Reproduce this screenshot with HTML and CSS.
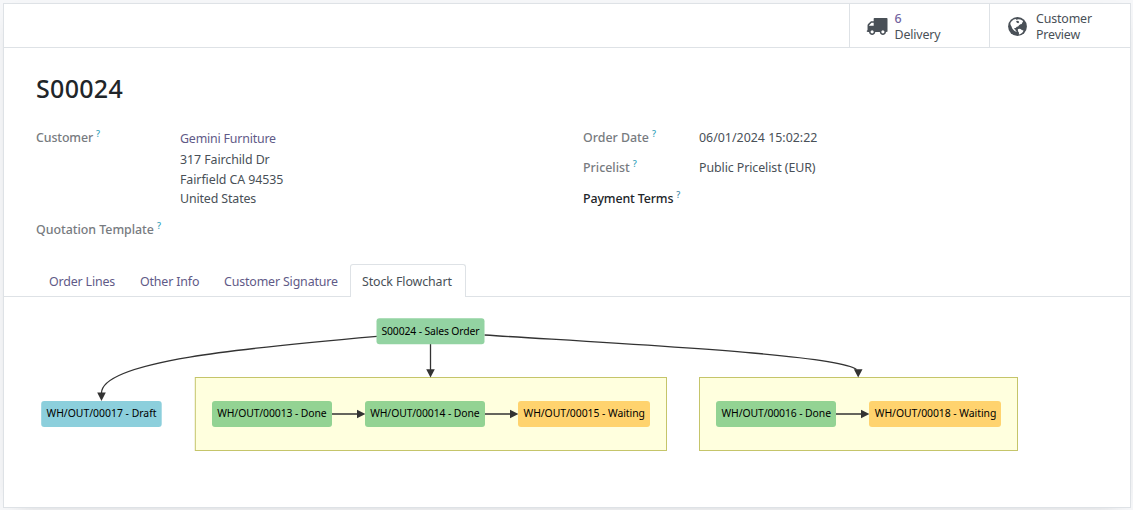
FILE: index.html
```html
<!DOCTYPE html>
<html lang="en">
<head>
<meta charset="utf-8">
<title>S00024</title>
<link rel="stylesheet" href="styles.css">
</head>
<body>
<main class="sheet">
  <header class="button-box">
    <button class="stat delivery">
      <svg class="truck" viewBox="0 0 1792 1792"><path d="M640 1408q0-52-38-90t-90-38-90 38-38 90 38 90 90 38 90-38 38-90zm-384-512h384v-256h-158q-13 0-22 9l-195 195q-9 9-9 22v30zm1280 512q0-52-38-90t-90-38-90 38-38 90 38 90 90 38 90-38 38-90zm256-1088v1024q0 15-4 26.5t-13.5 18.5-16.5 11.5-23.5 6-22.5 2-25.5 0-22.5-.5q0 106-75 181t-181 75-181-75-75-181h-384q0 106-75 181t-181 75-181-75-75-181h-64q-3 0-22.5.5t-25.5 0-22.5-2-23.5-6-16.5-11.5-13.5-18.5-4-26.5q0-26 19-45t45-19v-320q0-8-.5-35t0-38 2.5-34.5 6.5-37 14-30.5 22.5-30l198-198q19-19 50.5-32t58.5-13h160v-192q0-26 19-45t45-19h1024q26 0 45 19t19 45z"/></svg>
      <span class="stat-text"><b class="count">6</b><span class="t-delivery">Delivery</span></span>
    </button>
    <button class="stat preview">
      <svg class="globe" viewBox="0 0 19 19"><circle cx="9.5" cy="9.5" r="9.4"/><path class="land" d="M2.300 6 3.600 4.200 5.700 2.600 8 2l.5.900 1.500-.700 2.500.300 2.300 1.300.2 1.300-1.200.8.200 1.200-1.600.2-1.300 1-1 1.300-1.300.2-1.100 1.300-1.200-.100-.300 1 1.100.5.400 1.200 1 .6-.5.500-1.600-.700-1.300-1.300-1.200-1.600-.600-1.800-.900-1.500zM9.800 12.200l1.300-.5 1.500.4 1.200 1 1.700.5-.6 1.400-1.300 1.300-1.700.9-1 .3.100-1.700-1-1.500z"/><path d="M8.800 3.800l1.700.3.700 1.200-1 .9-1.300-.500-.8-1.100z"/></svg>
      <span class="stat-text"><span class="t-customer">Customer</span><span class="t-preview">Preview</span></span>
    </button>
  </header>

  <h1 class="title"><span>S00024</span></h1>

  <section class="fields">
    <div class="group">
      <div class="row customer-row">
        <label class="label"><span class="t-lcustomer">Customer</span><sup>?</sup></label>
        <div class="address">
          <a class="link t-gemini">Gemini Furniture</a>
          <span class="t-street">317 Fairchild Dr</span>
          <span class="t-city">Fairfield CA 94535</span>
          <span class="t-country">United States</span>
        </div>
      </div>
      <div class="row"><label class="label"><span class="t-quotation">Quotation Template</span><sup>?</sup></label></div>
    </div>
    <div class="group right">
      <div class="row"><label class="label"><span class="t-date">Order Date</span><sup>?</sup></label><span class="t-datevalue">06/01/2024 15:02:22</span></div>
      <div class="row"><label class="label"><span class="t-pricelist">Pricelist</span><sup>?</sup></label><span class="t-price">Public Pricelist (EUR)</span></div>
      <div class="row terms"><label class="label strong"><span class="t-payment">Payment Terms</span><sup>?</sup></label></div>
    </div>
  </section>

  <nav class="tabs">
    <a class="tab tab-lines"><span>Order Lines</span></a>
    <a class="tab tab-info"><span>Other Info</span></a>
    <a class="tab tab-signature"><span>Customer Signature</span></a>
    <a class="tab tab-flow active"><span>Stock Flowchart</span></a>
  </nav>

  <svg class="flowchart" viewBox="4 297 1126 180" width="1126" height="180">
    <rect class="cluster" x="195.300" y="377.500" width="471.200" height="73"/>
    <rect class="cluster" x="699.500" y="377.500" width="318" height="73"/>
    <g class="edges">
      <path d="M377 336.300C245 348 101.500 361 101.500 393"/>
      <path d="M430.500 344V370"/>
      <path d="M484.500 335C650 345.500 838 355 856.500 369.500"/>
      <path d="M332 414H362M485 414H515M836 414H866"/>
    </g>
    <g class="heads">
      <path d="M97.200 392.600h8.600l-4.300 8.400zM426.200 369.200h8.600l-4.300 8.400zM853.900 369.200h8.600l-4.300 8.400zM357 409.700v8.600l8.400-4.300zM510 409.700v8.600l8.400-4.300zM861 409.700v8.600l8.400-4.300z"/>
    </g>
    <g class="nodes">
      <rect class="order" x="376.500" y="318.300" width="108" height="26" rx="3"/>
      <rect class="draft" x="41.200" y="401" width="120.500" height="26" rx="3"/>
      <rect class="done" x="212" y="401" width="120" height="26" rx="3"/>
      <rect class="done" x="365" y="401" width="120" height="26" rx="3"/>
      <rect class="waiting" x="518" y="401" width="132" height="26" rx="3"/>
      <rect class="done" x="716" y="401" width="120" height="26" rx="3"/>
      <rect class="waiting" x="869" y="401" width="132" height="26" rx="3"/>
      <text x="381.500" y="335" textLength="98">S00024 - Sales Order</text>
      <text x="46.500" y="417" textLength="110">WH/OUT/00017 - Draft</text>
      <text x="217.200" y="417" textLength="109.500">WH/OUT/00013 - Done</text>
      <text x="370.200" y="417" textLength="109.500">WH/OUT/00014 - Done</text>
      <text x="523.500" y="417" textLength="121.500">WH/OUT/00015 - Waiting</text>
      <text x="721.500" y="417" textLength="109.500">WH/OUT/00016 - Done</text>
      <text x="874.800" y="417" textLength="121.500">WH/OUT/00018 - Waiting</text>
    </g>
  </svg>
</main>
</body>
</html>
```
FILE: styles.css
```css
* { box-sizing: border-box; }
body {
  margin: 0;
  padding: 3px 2px 2px 3px;
  height: 510px;
  overflow: hidden;
  background: #f6f7f9;
  color: #495057;
  font: 12.4px/20px "Noto Sans", "Open Sans", sans-serif;
}
.sheet {
  height: 505px;
  border: 1px solid #dee2e6;
  background: #fff;
  box-shadow: 0 5px 20px -15px rgba(0, 0, 0, .4);
}
.button-box {
  display: flex;
  justify-content: flex-end;
  height: 44px;
  border-bottom: 1px solid #dee2e6;
}
.stat {
  display: flex;
  align-items: center;
  padding: 0;
  border: 0;
  border-left: 1px solid #dee2e6;
  background: none;
  color: #495057;
  font: inherit;
  line-height: 16px;
  text-align: left;
}
.delivery { width: 140px; padding-left: 16px; gap: 7px; }
.preview { width: 141px; padding-left: 18px; gap: 9px; }
.stat svg { fill: #495057; margin-top: 1px; }
.truck { width: 21.500px; height: 21.500px; }
.globe { width: 19px; height: 19px; }
.globe .land { fill: #fff; }
.stat-text {
  display: flex;
  flex-direction: column;
  align-items: flex-start;
  padding-top: 2px;
  letter-spacing: -.15px;
}
.count { color: #71639e; font-weight: 500; }
.title {
  margin: 0;
  padding: 22px 0 0 32px;
  color: #212529;
  font-size: 25px;
  font-weight: 500;
  letter-spacing: .3px;
  line-height: 36px;
}
.fields { display: flex; padding: 22px 0 0 32px; height: 134px; }
.group { flex: none; width: 547px; }
.row { display: flex; height: 30px; }
.terms { padding-top: 1px; }
.right .label { width: 116px; }
.customer-row { height: 92px; }
.label {
  width: 144px;
  flex: none;
  color: #777b80;
  font-weight: 500;
  white-space: nowrap;
}
.label.strong { color: #212529; }
.label.strong sup { color: #3c86a5; }
.label sup {
  margin-left: 3px;
  color: #2f9fba;
  font-size: 9px;
  line-height: 0;
  vertical-align: 5px;
}
.t-lcustomer, .t-payment { letter-spacing: -.13px; }
.t-quotation { letter-spacing: -.03px; }
.t-price { letter-spacing: -.08px; }
.address { display: flex; flex-direction: column; align-items: flex-start; padding-top: 1px; }
.link { color: #5f5a87; }
.t-gemini { letter-spacing: -.19px; }
.address .t-street { margin-top: 1px; letter-spacing: -.08px; }
.t-city { letter-spacing: -.07px; }
.address .t-country { margin-top: -1px; letter-spacing: -.13px; }
.tabs {
  display: flex;
  height: 33px;
  margin-top: 24px;
  padding-left: 33px;
  border-bottom: 1px solid #dee2e6;
}
.tab { padding: 8px 0 0 12px; color: #5f5a87; letter-spacing: -.15px; white-space: nowrap; }
.tab-lines { width: 91px; }
.tab-info { width: 84px; letter-spacing: -.15px; }
.tab-signature { width: 138px; }
.tab-flow { width: 116px; letter-spacing: -.1px; }
.tab.active {
  height: 33px;
  padding: 7px 0 0 11px;
  border: 1px solid #dee2e6;
  border-bottom: 0;
  border-radius: 3px 3px 0 0;
  background: #fff;
  color: #495057;
}
.flowchart { display: block; }
.cluster { fill: #ffffde; stroke: #c5c56a; stroke-width: 1; }
.edges { fill: none; stroke: #333; stroke-width: 1.3; }
.heads { fill: #333; }
.nodes text { fill: #000; font: 10.4px "Noto Sans", sans-serif; }
.order { fill: #93d3a2; }
.draft { fill: #8ccfdc; }
.done { fill: #93d393; }
.waiting { fill: #ffd36e; }
```
